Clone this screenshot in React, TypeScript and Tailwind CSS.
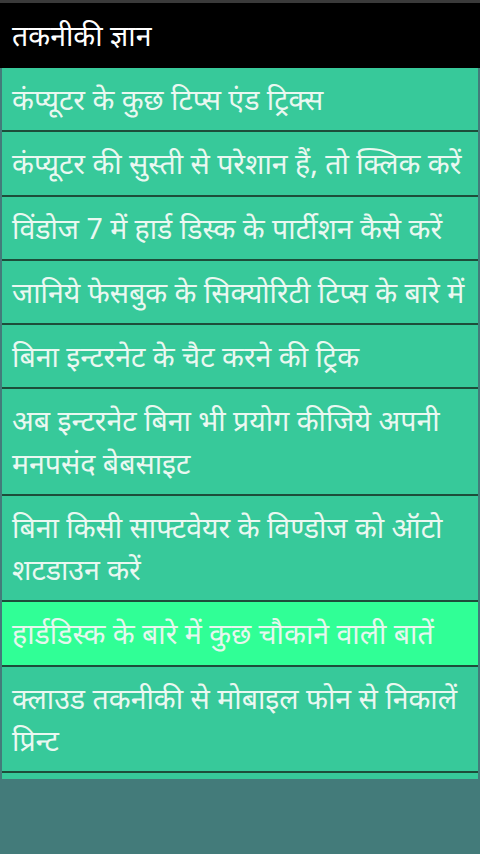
const items = [
  'कंप्यूटर के कुछ टिप्स एंड ट्रिक्स',
  'कंप्यूटर की सुस्ती से परेशान हैं, तो क्लिक करें',
  'विंडोज 7 में हार्ड डिस्क के पार्टीशन कैसे करें',
  'जानिये फेसबुक के सिक्योरिटी टिप्स के बारे में',
  'बिना इन्टरनेट के चैट करने की ट्रिक',
  'अब इन्टरनेट बिना भी प्रयोग कीजिये अपनी मनपसंद बेबसाइट',
  'बिना किसी साफ्टवेयर के विण्डोज को ऑटो शटडाउन करें',
  'हार्डडिस्क के बारे में कुछ चौकाने वाली बातें',
  'क्लाउड तकनीकी से मोबाइल फोन से निकालें प्रिन्ट',
]

export default function App() {
  return (
    <div
      className="w-[480px] h-[854px] bg-[#437b7a] flex flex-col overflow-hidden"
      style={{ fontFamily: '"Noto Sans", "Noto Sans Devanagari", sans-serif' }}
    >
      <div className="h-[3px] bg-[#3a3a3a]" />
      <header className="h-[65px] bg-black flex items-center px-[12px]">
        <h1 className="text-[28.5px] text-white leading-none">तकनीकी ज्ञान</h1>
      </header>
      <ul className="mx-[2px] bg-[#37c99a] pb-[6px]">
        {items.map((t, i) => (
          <li
            key={i}
            className={
              i === 7
                ? 'border-b-2 border-[#1d4d3a] bg-[#30ff96] pl-[10px] pr-[4px] py-[10px] text-[28.5px] leading-[42.25px] text-[#e6f7ee]'
                : 'border-b-2 border-[#1d4d3a] bg-[#37c99a] pl-[10px] pr-[4px] py-[10px] text-[28.5px] leading-[42.25px] text-[#eaf8f1]'
            }
          >
            {t}
          </li>
        ))}
      </ul>
    </div>
  )
}
